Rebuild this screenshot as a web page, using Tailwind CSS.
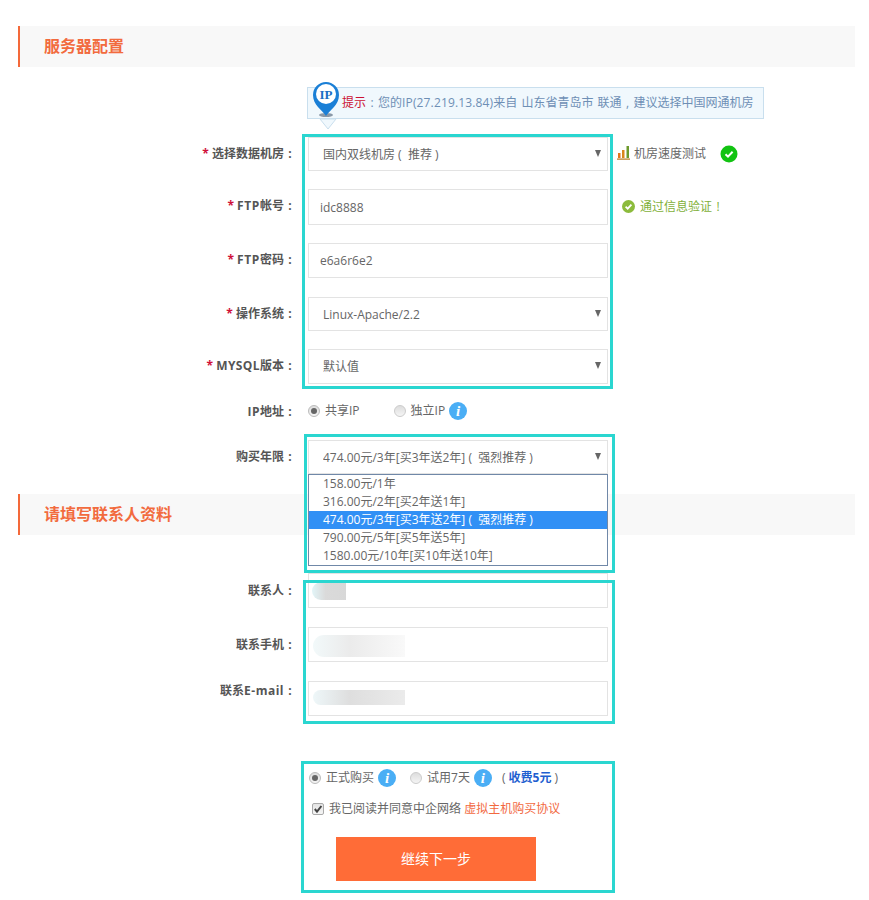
<!DOCTYPE html>
<html lang="zh-CN">
<head>
    <meta charset="UTF-8">
    <title>服务器配置</title>
    <script src="https://cdn.jsdelivr.net/npm/@tailwindcss/browser@4"></script>
</head>
<body class="relative h-[900px] overflow-hidden bg-white text-[12px] text-[#666] font-['Open_Sans','Noto_Sans_CJK_SC',sans-serif]">
    <div class="px-[18px] pt-[26px]">
        <!-- server config -->
        <h2 class="flex h-[41px] w-[837px] items-center border-l-2 border-[#f4693a] bg-[#f8f8f8] pb-[2px] pl-[24px] text-[16px] font-bold text-[#f26b3e]">服务器配置</h2>

        <div class="relative mt-[20px] ml-[289px] flex h-[32px] w-[457px] items-center whitespace-pre border border-[#c9dfee] bg-[#f0f8fd] pl-[34px] text-[#6e8fb5]">
            <span class="text-[#cc1133]">提示<span class="inline-block w-[12px] text-center text-[#6e8fb5]">:</span></span><span>您的<span class="tracking-[0.15px]">IP(27.219.13.84)</span>来自 <span class="mx-[1px]">山东省青岛市</span> 联通<span class="inline-block w-[12px] text-center">,</span>建议选择中国网通机房</span>
            <svg class="absolute left-[4px] top-[-7px]" width="28" height="50" viewBox="0 0 28 50">
                <path d="M8 38 L24 38 L16 48 Z" fill="#f0f8fd" stroke="#c9dfee"/>
                <ellipse cx="14" cy="34" rx="7" ry="2" fill="#8a99a8"/>
                <path d="M14 35 C10 29 1 24 1 14 A13 13 0 0 1 27 14 C27 24 18 29 14 35 Z" fill="#1a7fd6"/>
                <circle cx="14" cy="13" r="10" fill="#fff"/>
                <text x="14" y="17.5" text-anchor="middle" font-size="13" font-weight="700" fill="#1a6fc4" font-family="'Liberation Serif',serif">IP</text>
            </svg>
        </div>

        <div class="mt-[18px] flex h-[34px] items-center">
            <label class="mb-[1px] w-[278px] text-right font-bold text-[#555]"><span class="text-[#d0103a]">*</span> 选择数据机房<span class="inline-block w-[12px] text-center">:</span></label>
            <div class="relative ml-[12px] h-full w-[300px]">
                <select class="h-full w-full appearance-none border border-[#e3e3e3] bg-white pt-[2px] pl-[14px] text-[#666]"><option>国内双线机房&nbsp;(&nbsp;&nbsp;推荐&nbsp;)</option></select>
                <svg class="absolute right-[7px] top-[13px]" width="6" height="7" viewBox="0 0 6 7"><path d="M0 0H6L3 7Z" fill="#666"/></svg>
            </div>
            <svg class="ml-[9px] mb-[3px]" width="13" height="15" viewBox="0 0 13 15">
                <rect x="1" y="8" width="2.5" height="5" fill="#e2741c"/><rect x="5" y="5" width="2.5" height="8" fill="#d9861c"/><rect x="9.5" y="1" width="2.5" height="12" fill="#6d9a2c"/><rect x="0" y="13.5" width="13" height="1.2" fill="#b5761c"/>
            </svg>
            <span class="ml-[4px] text-[#666]">机房速度测试</span>
            <svg class="ml-[14px]" width="18" height="18" viewBox="0 0 18 18"><circle cx="9" cy="9" r="8.5" fill="#12c312"/><path d="M5.5 9.2 L8 11.6 L12.6 6.8" fill="none" stroke="#fff" stroke-width="2"/></svg>
        </div>

        <div class="mt-[18px] flex h-[36px] items-center">
            <label class="mb-[3px] w-[278px] text-right font-bold text-[#555]"><span class="text-[#d0103a]">*</span> <span class="tracking-[0.6px]">FTP</span>帐号<span class="inline-block w-[12px] text-center">:</span></label>
            <input class="ml-[12px] h-full w-[300px] border border-[#e3e3e3] pl-[11px] text-[#666]" value="idc8888">
            <svg class="ml-[14px] mb-[1px]" width="13" height="13" viewBox="0 0 13 13"><circle cx="6.5" cy="6.5" r="6.5" fill="#8cbb3c"/><path d="M3.6 6.6 L5.7 8.6 L9.4 4.6" fill="none" stroke="#fff" stroke-width="1.8"/></svg>
            <span class="ml-[5px] mb-[1px] text-[#7fb03a]">通过信息验证<span class="inline-block w-[12px] text-center">!</span></span>
        </div>

        <div class="mt-[18px] flex h-[35px] items-center">
            <label class="mb-[2px] w-[278px] text-right font-bold text-[#555]"><span class="text-[#d0103a]">*</span> <span class="tracking-[0.6px]">FTP</span>密码<span class="inline-block w-[12px] text-center">:</span></label>
            <input class="ml-[12px] h-full w-[300px] border border-[#e3e3e3] pl-[11px] text-[#666]" value="e6a6r6e2">
        </div>

        <div class="mt-[19px] flex h-[34px] items-center">
            <label class="mb-[1px] w-[278px] text-right font-bold text-[#555]"><span class="text-[#d0103a]">*</span> 操作系统<span class="inline-block w-[12px] text-center">:</span></label>
            <div class="relative ml-[12px] h-full w-[300px]">
                <select class="h-full w-full appearance-none border border-[#e3e3e3] bg-white pt-[2px] pl-[14px] text-[#666]"><option>Linux-Apache/2.2</option></select>
                <svg class="absolute right-[7px] top-[13px]" width="6" height="7" viewBox="0 0 6 7"><path d="M0 0H6L3 7Z" fill="#666"/></svg>
            </div>
        </div>

        <div class="mt-[18px] flex h-[35px] items-center">
            <label class="mb-[1px] w-[278px] text-right font-bold text-[#555]"><span class="text-[#d0103a]">*</span> <span class="tracking-[0.4px]">MYSQL</span>版本<span class="inline-block w-[12px] text-center">:</span></label>
            <div class="relative ml-[12px] h-full w-[300px]">
                <select class="h-full w-full appearance-none border border-[#e3e3e3] bg-white pl-[14px] text-[#666]"><option>默认值</option></select>
                <svg class="absolute right-[7px] top-[13px]" width="6" height="7" viewBox="0 0 6 7"><path d="M0 0H6L3 7Z" fill="#666"/></svg>
            </div>
        </div>

        <div class="mt-[17px] flex h-[20px] items-center">
            <label class="mt-[1px] w-[278px] text-right font-bold text-[#555]"><span class="tracking-[0.5px]">IP</span>地址<span class="inline-block w-[12px] text-center">:</span></label>
            <span class="ml-[12px] flex size-[12px] items-center justify-center rounded-full border border-[#bbb] bg-gradient-to-b from-[#ddd] to-[#f5f5f5]"><span class="size-[6px] rounded-full bg-[#666]"></span></span>
            <span class="ml-[5px]">共享IP</span>
            <span class="ml-[34px] size-[12px] rounded-full border border-[#ccc] bg-gradient-to-b from-[#ddd] to-[#f5f5f5]"></span>
            <span class="ml-[5px]">独立IP</span>
            <span class="ml-[4px] flex size-[18px] items-center justify-center rounded-full bg-[#4aaef5] font-['Liberation_Serif',serif] text-[15px] font-bold italic text-white">i</span>
        </div>

        <div class="mt-[19px] flex h-[34px] items-center">
            <label class="mb-[1px] w-[278px] text-right font-bold text-[#555]">购买年限<span class="inline-block w-[12px] text-center">:</span></label>
            <div class="relative z-10 ml-[12px] h-full w-[300px]">
                <select class="h-full w-full appearance-none border border-[#e3e3e3] bg-white pt-[2px] pl-[14px] text-[#666]"><option>474.00元/3年[买3年送2年]&nbsp;(&nbsp;&nbsp;强烈推荐&nbsp;)</option></select>
                <svg class="absolute right-[7px] top-[13px]" width="6" height="7" viewBox="0 0 6 7"><path d="M0 0H6L3 7Z" fill="#666"/></svg>
                <ul class="absolute left-0 top-full w-full border border-[#7088a8] bg-white text-[12px] leading-[18px] text-[#666]">
                    <li class="pl-[14px]">158.00元/1年</li>
                    <li class="pl-[14px]">316.00元/2年[买2年送1年]</li>
                    <li class="bg-[#3190f5] pl-[14px] text-white">474.00元/3年[买3年送2年]&nbsp;(&nbsp;&nbsp;强烈推荐&nbsp;)</li>
                    <li class="pl-[14px]">790.00元/5年[买5年送5年]</li>
                    <li class="pl-[14px]">1580.00元/10年[买10年送10年]</li>
                </ul>
            </div>
        </div>

        <!-- contact info -->
        <h2 class="mt-[20px] flex h-[41px] w-[837px] items-center border-l-2 border-[#f4693a] bg-[#f8f8f8] pb-[2px] pl-[24px] text-[16px] font-bold text-[#f26b3e]">请填写联系人资料</h2>

        <div class="mt-[38px] flex h-[35px] items-center">
            <label class="w-[278px] text-right font-bold text-[#555]">联系人<span class="inline-block w-[12px] text-center">:</span></label>
            <div class="relative ml-[12px] h-full w-[300px] border border-[#e3e3e3]">
                <div class="absolute left-[3px] top-[8px] h-[18px] w-[34px] rounded-l-full bg-gradient-to-r from-[#e2f5f8] via-[#dadada] via-40% to-[#d8d8d8] blur-[0.5px]"></div>
            </div>
        </div>

        <div class="mt-[19px] flex h-[35px] items-center">
            <label class="w-[278px] text-right font-bold text-[#555]">联系手机<span class="inline-block w-[12px] text-center">:</span></label>
            <div class="relative ml-[12px] h-full w-[300px] border border-[#e3e3e3]">
                <div class="absolute left-[4px] top-[7px] h-[22px] w-[92px] rounded-l-full bg-gradient-to-r from-[#f2f9fa] via-[#ebebeb] via-40% to-[#f9f9f9] blur-[0.5px]"></div>
            </div>
        </div>

        <div class="mt-[19px] flex h-[35px] items-center">
            <label class="mb-[16px] w-[278px] text-right font-bold text-[#555]">联系<span class="tracking-[0.5px]">E-mail</span><span class="inline-block w-[12px] text-center">:</span></label>
            <div class="relative ml-[12px] h-full w-[300px] border border-[#e3e3e3]">
                <div class="absolute left-[4px] top-[8px] h-[15px] w-[92px] rounded-l-full bg-gradient-to-r from-[#eef7f9] via-[#dedede] via-40% to-[#ebebeb] blur-[0.5px]"></div>
            </div>
        </div>

        <!-- buy -->
        <div class="mt-[52px] ml-[291px] flex h-[20px] items-center">
            <span class="flex size-[12px] items-center justify-center rounded-full border border-[#bbb] bg-gradient-to-b from-[#ddd] to-[#f5f5f5]"><span class="size-[6px] rounded-full bg-[#666]"></span></span>
            <span class="ml-[5px]">正式购买</span>
            <span class="ml-[4px] flex size-[18px] items-center justify-center rounded-full bg-[#4aaef5] font-['Liberation_Serif',serif] text-[15px] font-bold italic text-white">i</span>
            <span class="ml-[14px] size-[12px] rounded-full border border-[#ccc] bg-gradient-to-b from-[#ddd] to-[#f5f5f5]"></span>
            <span class="ml-[5px]">试用7天</span>
            <span class="ml-[4px] flex size-[18px] items-center justify-center rounded-full bg-[#4aaef5] font-['Liberation_Serif',serif] text-[15px] font-bold italic text-white">i</span>
            <span class="ml-[10px] whitespace-pre">( <b class="text-[#1f5fd0]">收费5元</b> )</span>
        </div>

        <div class="mt-[11px] ml-[294px] flex h-[20px] items-center">
            <span class="flex size-[12px] items-center justify-center rounded-[2px] border border-[#aaa] bg-gradient-to-b from-[#e4e4e4] to-[#f5f5f5]">
                <svg width="10" height="10" viewBox="0 0 10 10"><path d="M1.8 5 L4 7.6 L8.4 2" fill="none" stroke="#444" stroke-width="2"/></svg>
            </span>
            <span class="ml-[5px]">我已阅读并同意中企网络 <a class="text-[#f2693f]">虚拟主机购买协议</a></span>
        </div>

        <button class="mt-[18px] ml-[318px] h-[44px] w-[200px] bg-[#ff6c37] pb-[2px] text-[14px] text-white">继续下一步</button>
    </div>

    <!-- annotation frames -->
    <div class="pointer-events-none absolute left-[302px] top-[134px] z-20 h-[255px] w-[311px] border-[3px] border-[#2ad6d0]"></div>
    <div class="pointer-events-none absolute left-[304px] top-[434px] z-20 h-[139px] w-[311px] border-[3px] border-[#2ad6d0]"></div>
    <div class="pointer-events-none absolute left-[303px] top-[580px] z-20 h-[144px] w-[312px] border-[3px] border-[#2ad6d0]"></div>
    <div class="pointer-events-none absolute left-[301px] top-[761px] z-20 h-[132px] w-[314px] border-[3px] border-[#2ad6d0]"></div>
</body>
</html>
